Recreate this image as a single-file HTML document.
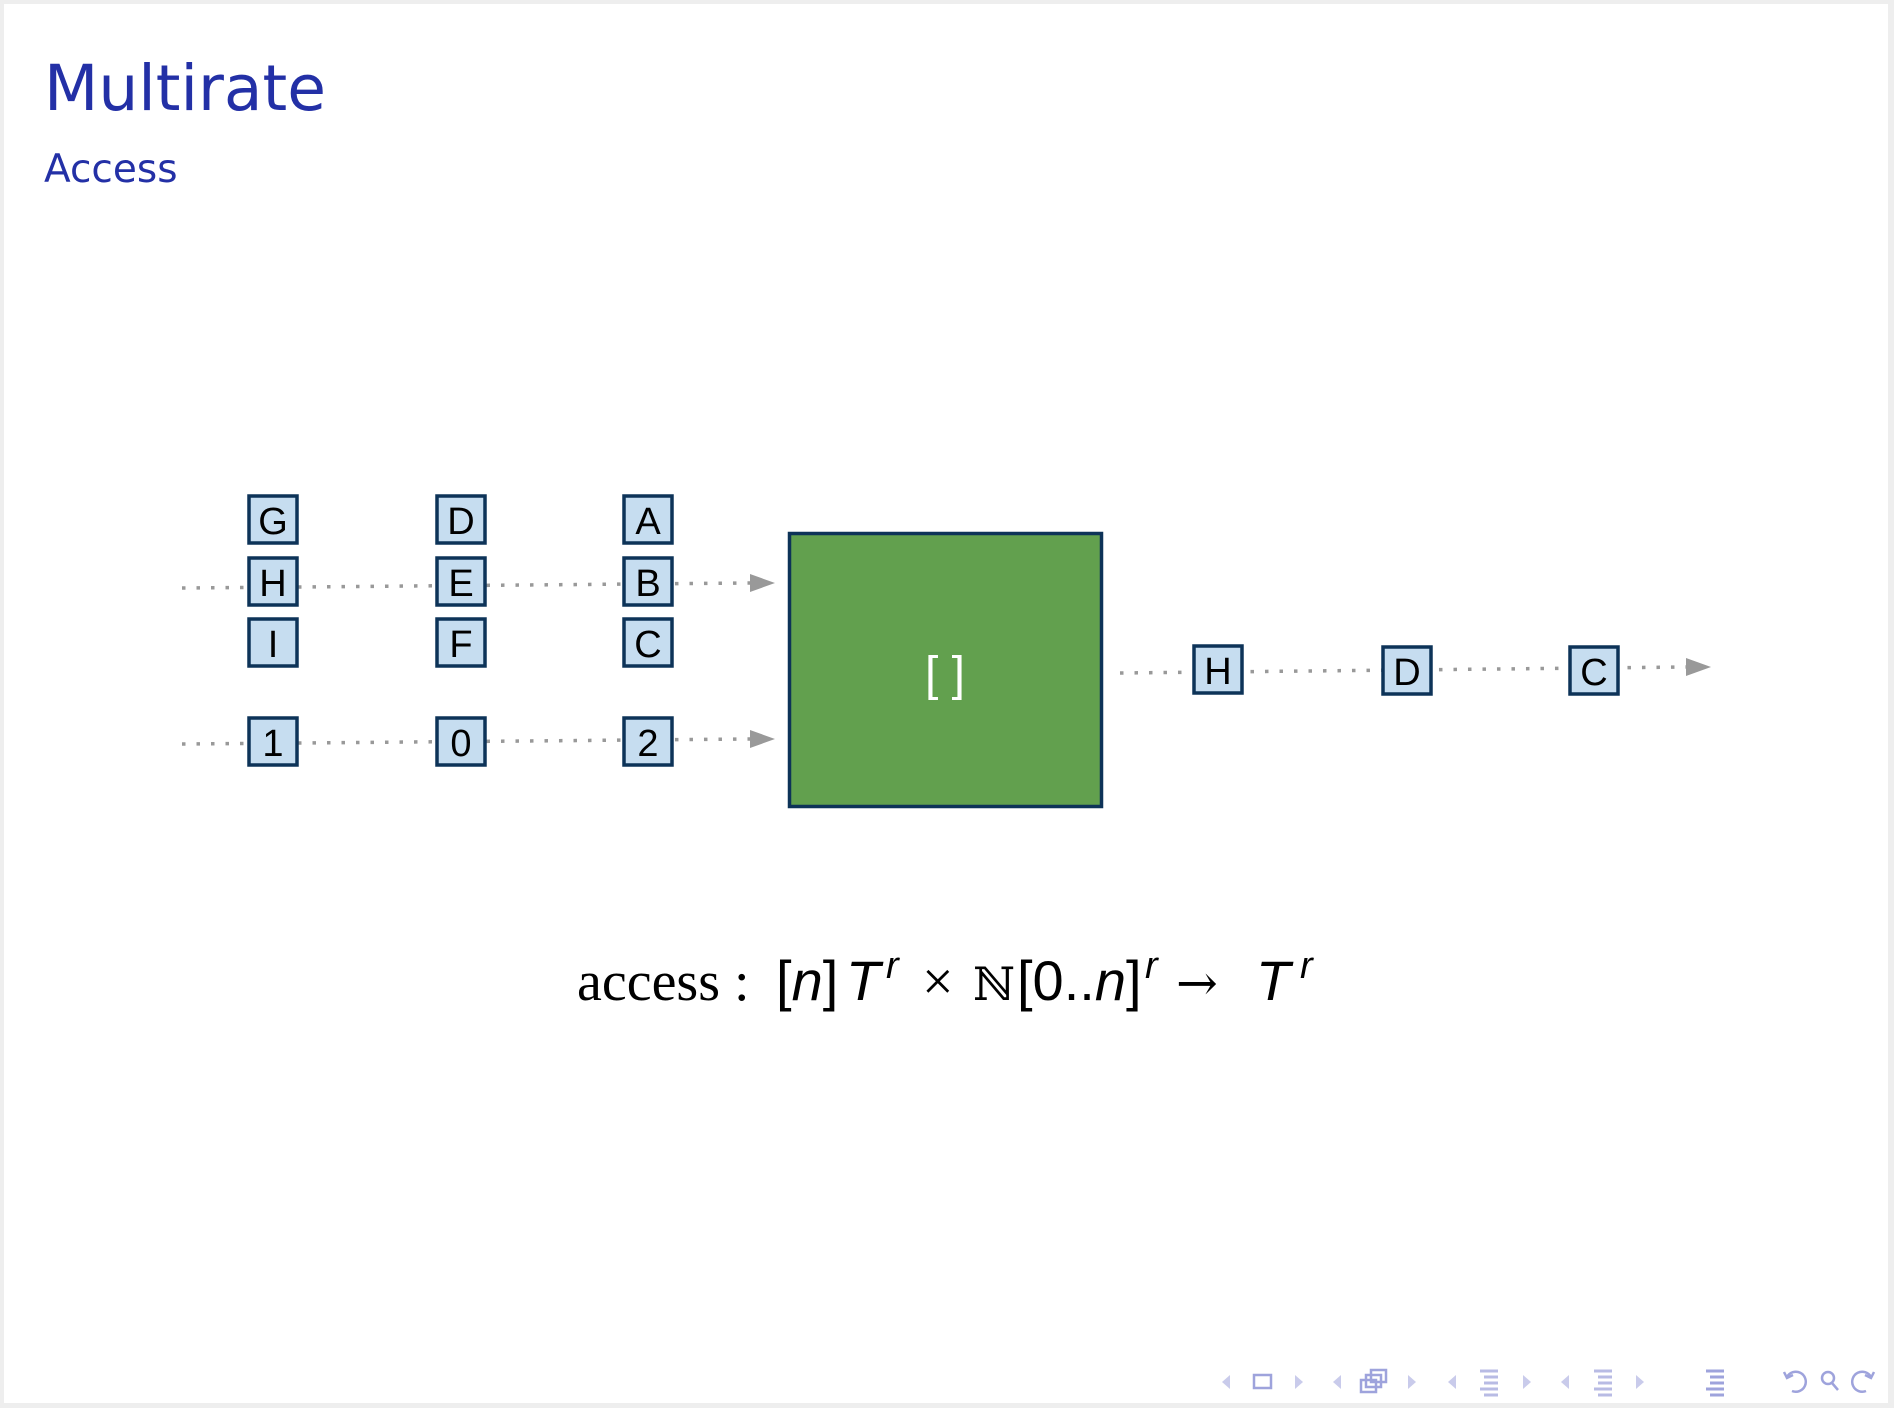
<!DOCTYPE html>
<html><head><meta charset="utf-8"><style>
html,body{margin:0;padding:0;background:#eeeeee;}
body{width:1894px;height:1408px;position:relative;overflow:hidden;font-family:"Liberation Sans",sans-serif;}
.slide{position:absolute;left:4px;top:4px;width:1884px;height:1399px;background:#fff;}
</style></head><body>
<div class="slide"></div>
<svg width="1894" height="1408" style="position:absolute;left:0;top:0" xmlns="http://www.w3.org/2000/svg">
<text x="44" y="110" font-family="DejaVu Sans, Liberation Sans, sans-serif" font-size="63" fill="#2330a6">Multirate</text>
<text x="44" y="182" font-family="DejaVu Sans, Liberation Sans, sans-serif" font-size="39" fill="#2330a6">Access</text>

<g stroke="#999" stroke-width="3.5" stroke-dasharray="3.5 11" fill="none">
<line x1="182" y1="588" x2="752" y2="583"/>
<line x1="182" y1="744" x2="752" y2="739"/>
<line x1="1120" y1="673" x2="1686" y2="667"/>
</g>
<g fill="#999">
<polygon points="750,574 775,583 750,592"/>
<polygon points="750,730 775,739 750,748"/>
<polygon points="1686,658 1711,667 1686,676"/>
</g>
<rect x="789.5" y="533.5" width="312" height="273" fill="#62a04e" stroke="#0d3358" stroke-width="3.5"/>
<text x="945" y="690" font-size="48" fill="#fff" text-anchor="middle">[ ]</text>

<g fill="#c6ddf0" stroke="#0d3358" stroke-width="3.5">
<rect x="249" y="496" width="48" height="47"/>
<rect x="249" y="558" width="48" height="47"/>
<rect x="249" y="619" width="48" height="47"/>
<rect x="249" y="718" width="48" height="47"/>
<rect x="437" y="496" width="48" height="47"/>
<rect x="437" y="558" width="48" height="47"/>
<rect x="437" y="619" width="48" height="47"/>
<rect x="437" y="718" width="48" height="47"/>
<rect x="624" y="496" width="48" height="47"/>
<rect x="624" y="558" width="48" height="47"/>
<rect x="624" y="619" width="48" height="47"/>
<rect x="624" y="718" width="48" height="47"/>
<rect x="1194" y="646" width="48" height="47"/>
<rect x="1383" y="647" width="48" height="47"/>
<rect x="1570" y="647" width="48" height="47"/>
</g>
<g font-size="38" fill="#000" text-anchor="middle">
<text x="273" y="534">G</text><text x="273" y="596">H</text><text x="273" y="657">I</text><text x="273" y="756">1</text>
<text x="461" y="534">D</text><text x="461" y="596">E</text><text x="461" y="657">F</text><text x="461" y="756">0</text>
<text x="648" y="534">A</text><text x="648" y="596">B</text><text x="648" y="657">C</text><text x="648" y="756">2</text>
<text x="1218" y="684">H</text><text x="1407" y="685">D</text><text x="1594" y="685">C</text>
</g>

<g fill="#000" font-size="56">
<text x="577" y="1000" font-family="Liberation Serif, serif">access :</text>
<text x="776" y="1000">[<tspan font-style="italic">n</tspan>]</text>
<text x="846" y="1000" font-style="italic">T</text>
<text x="886" y="978" font-style="italic" font-size="38">r</text>
<text x="922" y="1000" font-family="Liberation Serif, serif">×</text>
<text x="973" y="1000" font-family="DejaVu Serif, serif" font-size="46">ℕ</text>
<text x="1017" y="1000">[0..<tspan font-style="italic">n</tspan>]</text>
<text x="1145" y="978" font-style="italic" font-size="38">r</text>
<text x="1176" y="1000" font-family="DejaVu Serif, serif" font-size="50">→</text>
<text x="1256" y="1000" font-style="italic">T</text>
<text x="1300" y="978" font-style="italic" font-size="38">r</text>
</g>

<g fill="#c9cbeb" stroke="none">
<polygon points="1230,1375 1222,1382 1230,1389"/>
<polygon points="1295,1375 1303,1382 1295,1389"/>
<polygon points="1341,1375 1333,1382 1341,1389"/>
<polygon points="1408,1375 1416,1382 1408,1389"/>
<polygon points="1456,1375 1448,1382 1456,1389"/>
<polygon points="1523,1375 1531,1382 1523,1389"/>
<polygon points="1569,1375 1561,1382 1569,1389"/>
<polygon points="1636,1375 1644,1382 1636,1389"/>
</g>
<g fill="none" stroke="#9ea3dc" stroke-width="2.5">
<rect x="1254" y="1375" width="17" height="13"/>
<rect x="1361" y="1380" width="15" height="12"/><rect x="1366" y="1375" width="15" height="12"/><rect x="1371" y="1370" width="15" height="12"/>
</g>
<g stroke="#b8bbe4" stroke-width="3">
<line x1="1480" y1="1371" x2="1498" y2="1371"/><line x1="1484" y1="1377" x2="1498" y2="1377"/><line x1="1484" y1="1383" x2="1498" y2="1383"/><line x1="1480" y1="1389" x2="1498" y2="1389"/><line x1="1484" y1="1395" x2="1498" y2="1395"/>
<line x1="1594" y1="1371" x2="1612" y2="1371"/><line x1="1598" y1="1377" x2="1612" y2="1377"/><line x1="1598" y1="1383" x2="1612" y2="1383"/><line x1="1594" y1="1389" x2="1612" y2="1389"/><line x1="1598" y1="1395" x2="1612" y2="1395"/>
</g>
<g stroke="#9ea3dc" stroke-width="3">
<line x1="1706" y1="1371" x2="1724" y2="1371"/><line x1="1710" y1="1377" x2="1724" y2="1377"/><line x1="1710" y1="1383" x2="1724" y2="1383"/><line x1="1706" y1="1389" x2="1724" y2="1389"/><line x1="1710" y1="1395" x2="1724" y2="1395"/>
</g>
<g fill="none" stroke="#9ea3dc" stroke-width="2.5">
<path d="M1787,1377 A10,10 0 1 1 1792,1391"/><path d="M1784,1372 L1787,1378 L1793,1375"/>
<circle cx="1828" cy="1378" r="6"/><line x1="1832" y1="1383" x2="1838" y2="1390"/>
<path d="M1871,1377 A10,10 0 1 0 1866,1391"/><path d="M1874,1372 L1871,1378 L1865,1375"/>
</g>
</svg>
</body></html>
